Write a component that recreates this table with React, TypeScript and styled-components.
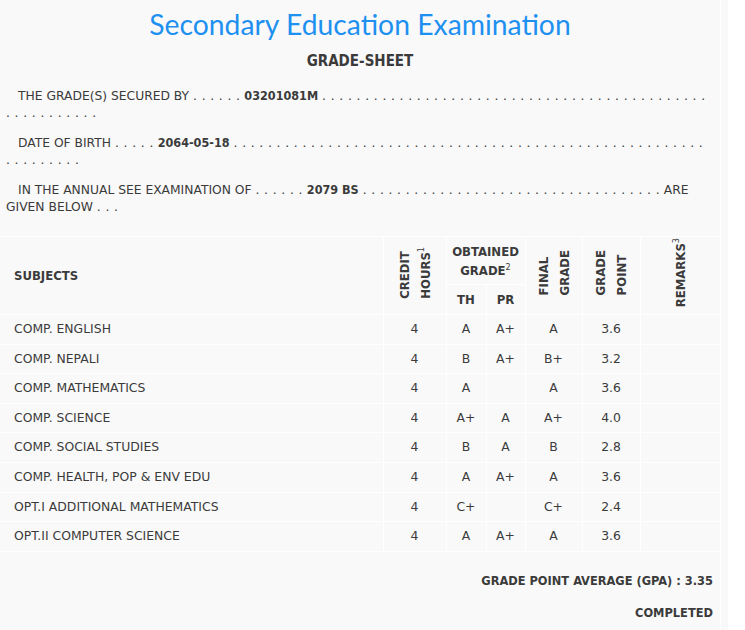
import React from "react";
import styled, { createGlobalStyle } from "styled-components";

const Global = createGlobalStyle`
  html, body { margin: 0; padding: 0; background: #fff; }
  body { font-family: "DejaVu Sans", sans-serif; color: #3b3b3b; }
`;

const Page = styled.div`
  width: 728px;
  min-height: 630px;
  background: #f9f9f9;
`;

const Sheet = styled.div`
  width: 720px;
  min-height: 630px;
  border-right: 1px solid #fff;
  box-sizing: content-box;
  display: flex;
  flex-direction: column;
`;

const Title = styled.h1`
  margin: 7px 0 0;
  text-align: center;
  font-family: Lato, "DejaVu Sans", sans-serif;
  font-weight: 400;
  font-size: 28.3px;
  line-height: 35px;
  color: #1e90f0;
`;

const SubTitle = styled.h2`
  margin: 10px 0 0;
  text-align: center;
  font-family: "DejaVu Sans Condensed", sans-serif;
  font-size: 15px;
  font-weight: 700;
  line-height: 18px;
  color: #3b3b3b;
`;

const Para = styled.p<{ $top: number }>`
  margin: ${(p) => p.$top}px 0 0;
  padding: 0 12px 0 6px;
  text-indent: 12px;
  font-family: "DejaVu Sans", sans-serif;
  font-size: 12.3px;
  line-height: 17px;
  color: #3b3b3b;
  b { font-family: "DejaVu Sans Condensed", sans-serif; font-weight: 700; font-size: 12.5px; }
`;

const Dots = styled.span`
  letter-spacing: 0.4px;
`;

const Table = styled.table`
  margin-top: 20px;
  width: 720px;
  border-collapse: collapse;
  table-layout: fixed;
  font-size: 12.4px;
  color: #3b3b3b;
  td, th { border: 1px solid #fff; }
  tr > :first-child { border-left: none; }
`;

const Th = styled.th<{ $align?: string }>`
  font-family: "DejaVu Sans Condensed", sans-serif;
  font-weight: 700;
  font-size: 13px;
  text-align: ${(p) => p.$align || "center"};
  padding: ${(p) => (p.$align === "left" ? "0 0 0 14px" : "0")};
  vertical-align: middle;
  line-height: 19px;
  sup { font-weight: 400; font-size: 9px; line-height: 0; }
`;

const Vertical = styled.div`
  writing-mode: vertical-rl;
  transform: rotate(180deg);
  margin: 0 auto;
  text-align: left;
  line-height: 21px;
  display: inline-block;
`;

const Td = styled.td<{ $align?: string }>`
  text-align: ${(p) => p.$align || "center"};
  padding: ${(p) => (p.$align === "left" ? "6px 0 6px 14px" : "6px 0")};
  line-height: 16.6px;
  white-space: nowrap;
`;

const Footer = styled.div`
  margin-top: 20px;
  padding-right: 7px;
  display: flex;
  flex-direction: column;
  align-items: flex-end;
  gap: 15px;
  font-family: "DejaVu Sans Condensed", sans-serif;
  font-weight: 700;
  font-size: 12.7px;
  line-height: 17px;
`;

const rows = [
  ["COMP. ENGLISH", "4", "A", "A+", "A", "3.6"],
  ["COMP. NEPALI", "4", "B", "A+", "B+", "3.2"],
  ["COMP. MATHEMATICS", "4", "A", "", "A", "3.6"],
  ["COMP. SCIENCE", "4", "A+", "A", "A+", "4.0"],
  ["COMP. SOCIAL STUDIES", "4", "B", "A", "B", "2.8"],
  ["COMP. HEALTH, POP & ENV EDU", "4", "A", "A+", "A", "3.6"],
  ["OPT.I ADDITIONAL MATHEMATICS", "4", "C+", "", "C+", "2.4"],
  ["OPT.II COMPUTER SCIENCE", "4", "A", "A+", "A", "3.6"],
];

const dots = (n: number) => <Dots>{Array(n).fill(".").join(" ")}</Dots>;

export default function App() {
  return (
    <>
      <Global />
      <Page>
        <Sheet>
          <Title>Secondary Education Examination</Title>
          <SubTitle>GRADE-SHEET</SubTitle>
          <Para $top={17}>
            THE GRADE(S) SECURED BY {dots(6)} <b>03201081M</b> {dots(56)}
          </Para>
          <Para $top={12}>
            DATE OF BIRTH {dots(5)} <b>2064-05-18</b> {dots(64)}
          </Para>
          <Para $top={12}>
            IN THE ANNUAL SEE EXAMINATION OF {dots(6)} <b>2079 BS</b> {dots(35)} ARE GIVEN BELOW {dots(3)}
          </Para>
          <Table>
            <colgroup>
              <col style={{ width: 383 }} />
              <col style={{ width: 63 }} />
              <col style={{ width: 40 }} />
              <col style={{ width: 39 }} />
              <col style={{ width: 57 }} />
              <col style={{ width: 58 }} />
              <col style={{ width: 80 }} />
            </colgroup>
            <thead>
              <tr style={{ height: 48 }}>
                <Th $align="left" rowSpan={2}>SUBJECTS</Th>
                <Th rowSpan={2}>
                  <Vertical>CREDIT<br />HOURS<sup>1</sup></Vertical>
                </Th>
                <Th colSpan={2}>
                  OBTAINED<br />GRADE<sup>2</sup>
                </Th>
                <Th rowSpan={2}>
                  <Vertical>FINAL<br />GRADE</Vertical>
                </Th>
                <Th rowSpan={2}>
                  <Vertical>GRADE<br />POINT</Vertical>
                </Th>
                <Th rowSpan={2}>
                  <Vertical>REMARKS<sup>3</sup></Vertical>
                </Th>
              </tr>
              <tr style={{ height: 30 }}>
                <Th>TH</Th>
                <Th>PR</Th>
              </tr>
            </thead>
            <tbody>
              {rows.map((r) => (
                <tr key={r[0]}>
                  <Td $align="left">{r[0]}</Td>
                  <Td>{r[1]}</Td>
                  <Td>{r[2]}</Td>
                  <Td>{r[3]}</Td>
                  <Td>{r[4]}</Td>
                  <Td>{r[5]}</Td>
                  <Td></Td>
                </tr>
              ))}
            </tbody>
          </Table>
          <Footer>
            <span>GRADE POINT AVERAGE (GPA) : 3.35</span>
            <span>COMPLETED</span>
          </Footer>
        </Sheet>
      </Page>
    </>
  );
}
